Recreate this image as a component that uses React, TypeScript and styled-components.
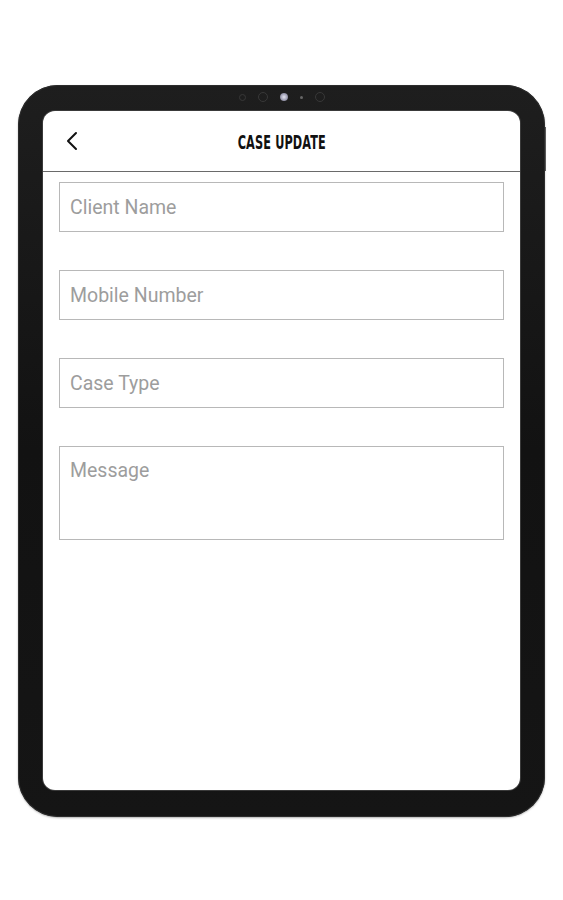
import React from "react";
import styled, { createGlobalStyle } from "styled-components";

const GlobalStyle = createGlobalStyle`
	html, body {
		margin: 0;
		padding: 0;
		background: #ffffff;
	}
	body {
		font-family: Roboto, "Noto Sans", Arial, sans-serif;
	}
`;

const fields = [
	{ label: "Client Name", tall: false },
	{ label: "Mobile Number", tall: false },
	{ label: "Case Type", tall: false },
	{ label: "Message", tall: true },
];

const App = () => {
	return (
		<>
			<GlobalStyle />
			<Page>
				<Device>
					<CameraRow>
						<Sensor $size={7} />
						<Sensor $size={10} />
						<Lens />
						<Dot />
						<Sensor $size={10} />
					</CameraRow>
					<SideButton />
					<Screen>
						<Header>
							<BackButton aria-label="Back">
								<svg width="14" height="20" viewBox="0 0 14 20" fill="none">
									<path
										d="M11 2 L3 10 L11 18"
										stroke="#111"
										strokeWidth="2"
										strokeLinecap="round"
										strokeLinejoin="round"
									/>
								</svg>
							</BackButton>
							<Title>CASE UPDATE</Title>
						</Header>
						<Form>
							{fields.map((f) =>
								f.tall ? (
									<MessageBox key={f.label} placeholder={f.label} />
								) : (
									<Field key={f.label} placeholder={f.label} />
								)
							)}
						</Form>
					</Screen>
				</Device>
			</Page>
		</>
	);
};

export default App;

const Page = styled.div`
	width: 563px;
	height: 900px;
	padding-top: 85px;
	box-sizing: border-box;
`;

const Device = styled.div`
	position: relative;
	margin-left: 18px;
	width: 527px;
	height: 732px;
	box-sizing: border-box;
	padding: 26px 25px 27px 25px;
	background: linear-gradient(180deg, #1e1e1e 0%, #121212 50%, #151515 100%);
	border-radius: 40px;
	box-shadow: 0 1px 2px rgba(0, 0, 0, 0.3), inset 0 0 0 1px #2c2c2c;
`;

const CameraRow = styled.div`
	position: absolute;
	top: 7px;
	left: 0;
	right: 0;
	height: 10px;
	display: flex;
	align-items: center;
	justify-content: center;
	gap: 12px;
`;

const Sensor = styled.div<{ $size: number }>`
	width: ${(p) => p.$size}px;
	height: ${(p) => p.$size}px;
	border-radius: 50%;
	border: 1px solid #383838;
	box-sizing: border-box;
`;

const Lens = styled.div`
	width: 8px;
	height: 8px;
	border-radius: 50%;
	background: radial-gradient(circle, #e6e6f2 0%, #9a9ab0 60%, #444 100%);
`;

const Dot = styled.div`
	width: 3px;
	height: 3px;
	border-radius: 50%;
	background: #666;
`;

const SideButton = styled.div`
	position: absolute;
	right: -1px;
	top: 42px;
	width: 1px;
	height: 44px;
	background: #5a5a5a;
`;

const Screen = styled.div`
	width: 100%;
	height: 100%;
	background: #ffffff;
	border-radius: 12px;
	overflow: hidden;
	display: flex;
	flex-direction: column;
	box-shadow: 0 0 0 1px #3a3a3a;
`;

const Header = styled.div`
	position: relative;
	height: 60px;
	flex-shrink: 0;
	display: flex;
	align-items: center;
	justify-content: center;
	border-bottom: 1px solid #6a6a6a;
`;

const BackButton = styled.button`
	position: absolute;
	left: 22px;
	top: 20px;
	background: none;
	border: none;
	padding: 0;
	display: flex;
	cursor: pointer;
`;

const Title = styled.h1`
	margin: 0;
	font-family: "DejaVu Sans Condensed", "Liberation Sans Narrow", sans-serif;
	font-weight: bold;
	font-size: 19px;
	letter-spacing: 0.2px;
	color: #111;
	transform: scaleX(0.66);
	margin-top: 1px;
	white-space: nowrap;
`;

const Form = styled.div`
	display: flex;
	flex-direction: column;
	gap: 38px;
	padding: 10px 16px;
`;

const Field = styled.input`
	height: 50px;
	box-sizing: border-box;
	border: 1.5px solid #b8b8b8;
	padding: 0 10px;
	font-family: Roboto, "Noto Sans", Arial, sans-serif;
	font-size: 19.5px;
	color: #333;
	outline: none;
	&::placeholder {
		color: #9d9d9d;
	}
`;

const MessageBox = styled.textarea`
	height: 94px;
	box-sizing: border-box;
	border: 1.5px solid #b8b8b8;
	padding: 12px 10px;
	font-family: Roboto, "Noto Sans", Arial, sans-serif;
	font-size: 19.5px;
	color: #333;
	resize: none;
	outline: none;
	&::placeholder {
		color: #9d9d9d;
	}
`;
